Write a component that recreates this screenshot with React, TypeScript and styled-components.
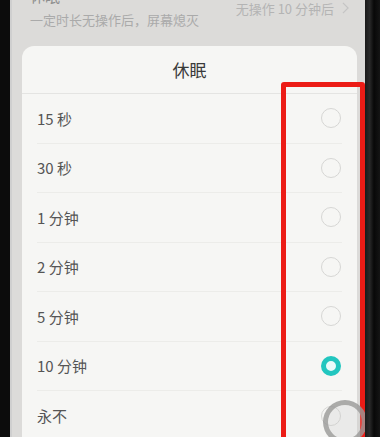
import React from 'react';
import styled, { createGlobalStyle } from 'styled-components';

const GlobalStyle = createGlobalStyle`
  html, body {
    margin: 0;
    padding: 0;
    background: #0c0c0c;
    overflow: hidden;
  }
  body {
    font-family: "Noto Sans CJK SC", "Noto Sans", sans-serif;
  }
`;

const options = ['15 秒', '30 秒', '1 分钟', '2 分钟', '5 分钟', '10 分钟', '永不'];
const selected = 5;

export default function App() {
  return (
    <>
      <GlobalStyle />
      <Phone>
        <Screen>
          <SettingItem>
            <SettingText>
              <SettingTitle>休眠</SettingTitle>
              <SettingHint>一定时长无操作后，屏幕熄灭</SettingHint>
            </SettingText>
            <SettingValue>
              无操作 10 分钟后
              <Chevron viewBox="0 0 8 14">
                <path d="M1 1l6 6-6 6" fill="none" stroke="#c4c4c4" strokeWidth="1.4" />
              </Chevron>
            </SettingValue>
          </SettingItem>

          <Dialog>
            <DialogTitle>休眠</DialogTitle>
            <OptionList>
              {options.map((label, i) => (
                <OptionRow key={label} $last={i === options.length - 1}>
                  <OptionLabel>{label}</OptionLabel>
                  <Radio $checked={i === selected} />
                </OptionRow>
              ))}
            </OptionList>
          </Dialog>

          <Highlight />
          <TouchMark />
        </Screen>
        <Bezel />
      </Phone>
    </>
  );
}

const Phone = styled.div`
  display: flex;
  width: 380px;
  height: 437px;
  padding-left: 10px;
  box-sizing: border-box;
  background: #0c0c0c;
`;

const Screen = styled.div`
  position: relative;
  width: 355px;
  height: 437px;
  background: #dcdbd9;
  overflow: hidden;
  border-left: 2px solid #cfcfcf;
  box-sizing: border-box;
`;

const Bezel = styled.div`
  flex: 1;
  background: linear-gradient(90deg, #1a1a1a 0, #2a2a2a 30%, #080808 60%, #151515 100%);
`;

const SettingItem = styled.div`
  display: flex;
  align-items: center;
  justify-content: space-between;
  margin-top: -14px;
  padding: 0 16px 0 18px;
`;

const SettingText = styled.div`
  display: flex;
  flex-direction: column;
  gap: 4px;
`;

const SettingTitle = styled.div`
  font-size: 15px;
  line-height: 20px;
  color: #8e8e8e;
`;

const SettingHint = styled.div`
  font-size: 13px;
  line-height: 20px;
  color: #aaaaaa;
`;

const SettingValue = styled.div`
  display: flex;
  align-items: center;
  gap: 8px;
  font-size: 13px;
  color: #b4b4b4;
`;

const Chevron = styled.svg`
  width: 7px;
  height: 12px;
`;

const Dialog = styled.div`
  margin: 16px 0 0 10px;
  width: 335px;
  background: #f6f6f4;
  border-radius: 12px 12px 0 0;
`;

const DialogTitle = styled.div`
  height: 47px;
  display: flex;
  align-items: center;
  justify-content: center;
  font-size: 17px;
  color: #3a3a3a;
  border-bottom: 1px solid #e4e4e2;
`;

const OptionList = styled.div`
  display: flex;
  flex-direction: column;
  padding: 0 15px;
`;

const OptionRow = styled.div<{ $last?: boolean }>`
  display: flex;
  align-items: center;
  justify-content: space-between;
  height: 49.5px;
  box-sizing: border-box;
  border-bottom: ${(p) => (p.$last ? 'none' : '1px solid #ecece9')};
`;

const OptionLabel = styled.span`
  font-size: 15px;
  color: #555555;
`;

const Radio = styled.span<{ $checked?: boolean }>`
  width: 20px;
  height: 20px;
  box-sizing: border-box;
  border-radius: 50%;
  margin-right: 1px;
  border: ${(p) => (p.$checked ? '5px solid #22c6bf' : '1px solid #d6d6d4')};
  background: ${(p) => (p.$checked ? '#e9fbfa' : 'transparent')};
`;

const Highlight = styled.div`
  position: absolute;
  left: 269px;
  top: 82px;
  width: 84px;
  height: 380px;
  box-sizing: border-box;
  border: 5px solid #ec1c16;
  border-radius: 3px;
`;

const TouchMark = styled.div`
  position: absolute;
  left: 311px;
  top: 400px;
  width: 44px;
  height: 44px;
  box-sizing: border-box;
  border-radius: 50%;
  border: 5px solid rgba(150, 150, 148, 0.75);
  background: rgba(200, 200, 198, 0.25);
`;
